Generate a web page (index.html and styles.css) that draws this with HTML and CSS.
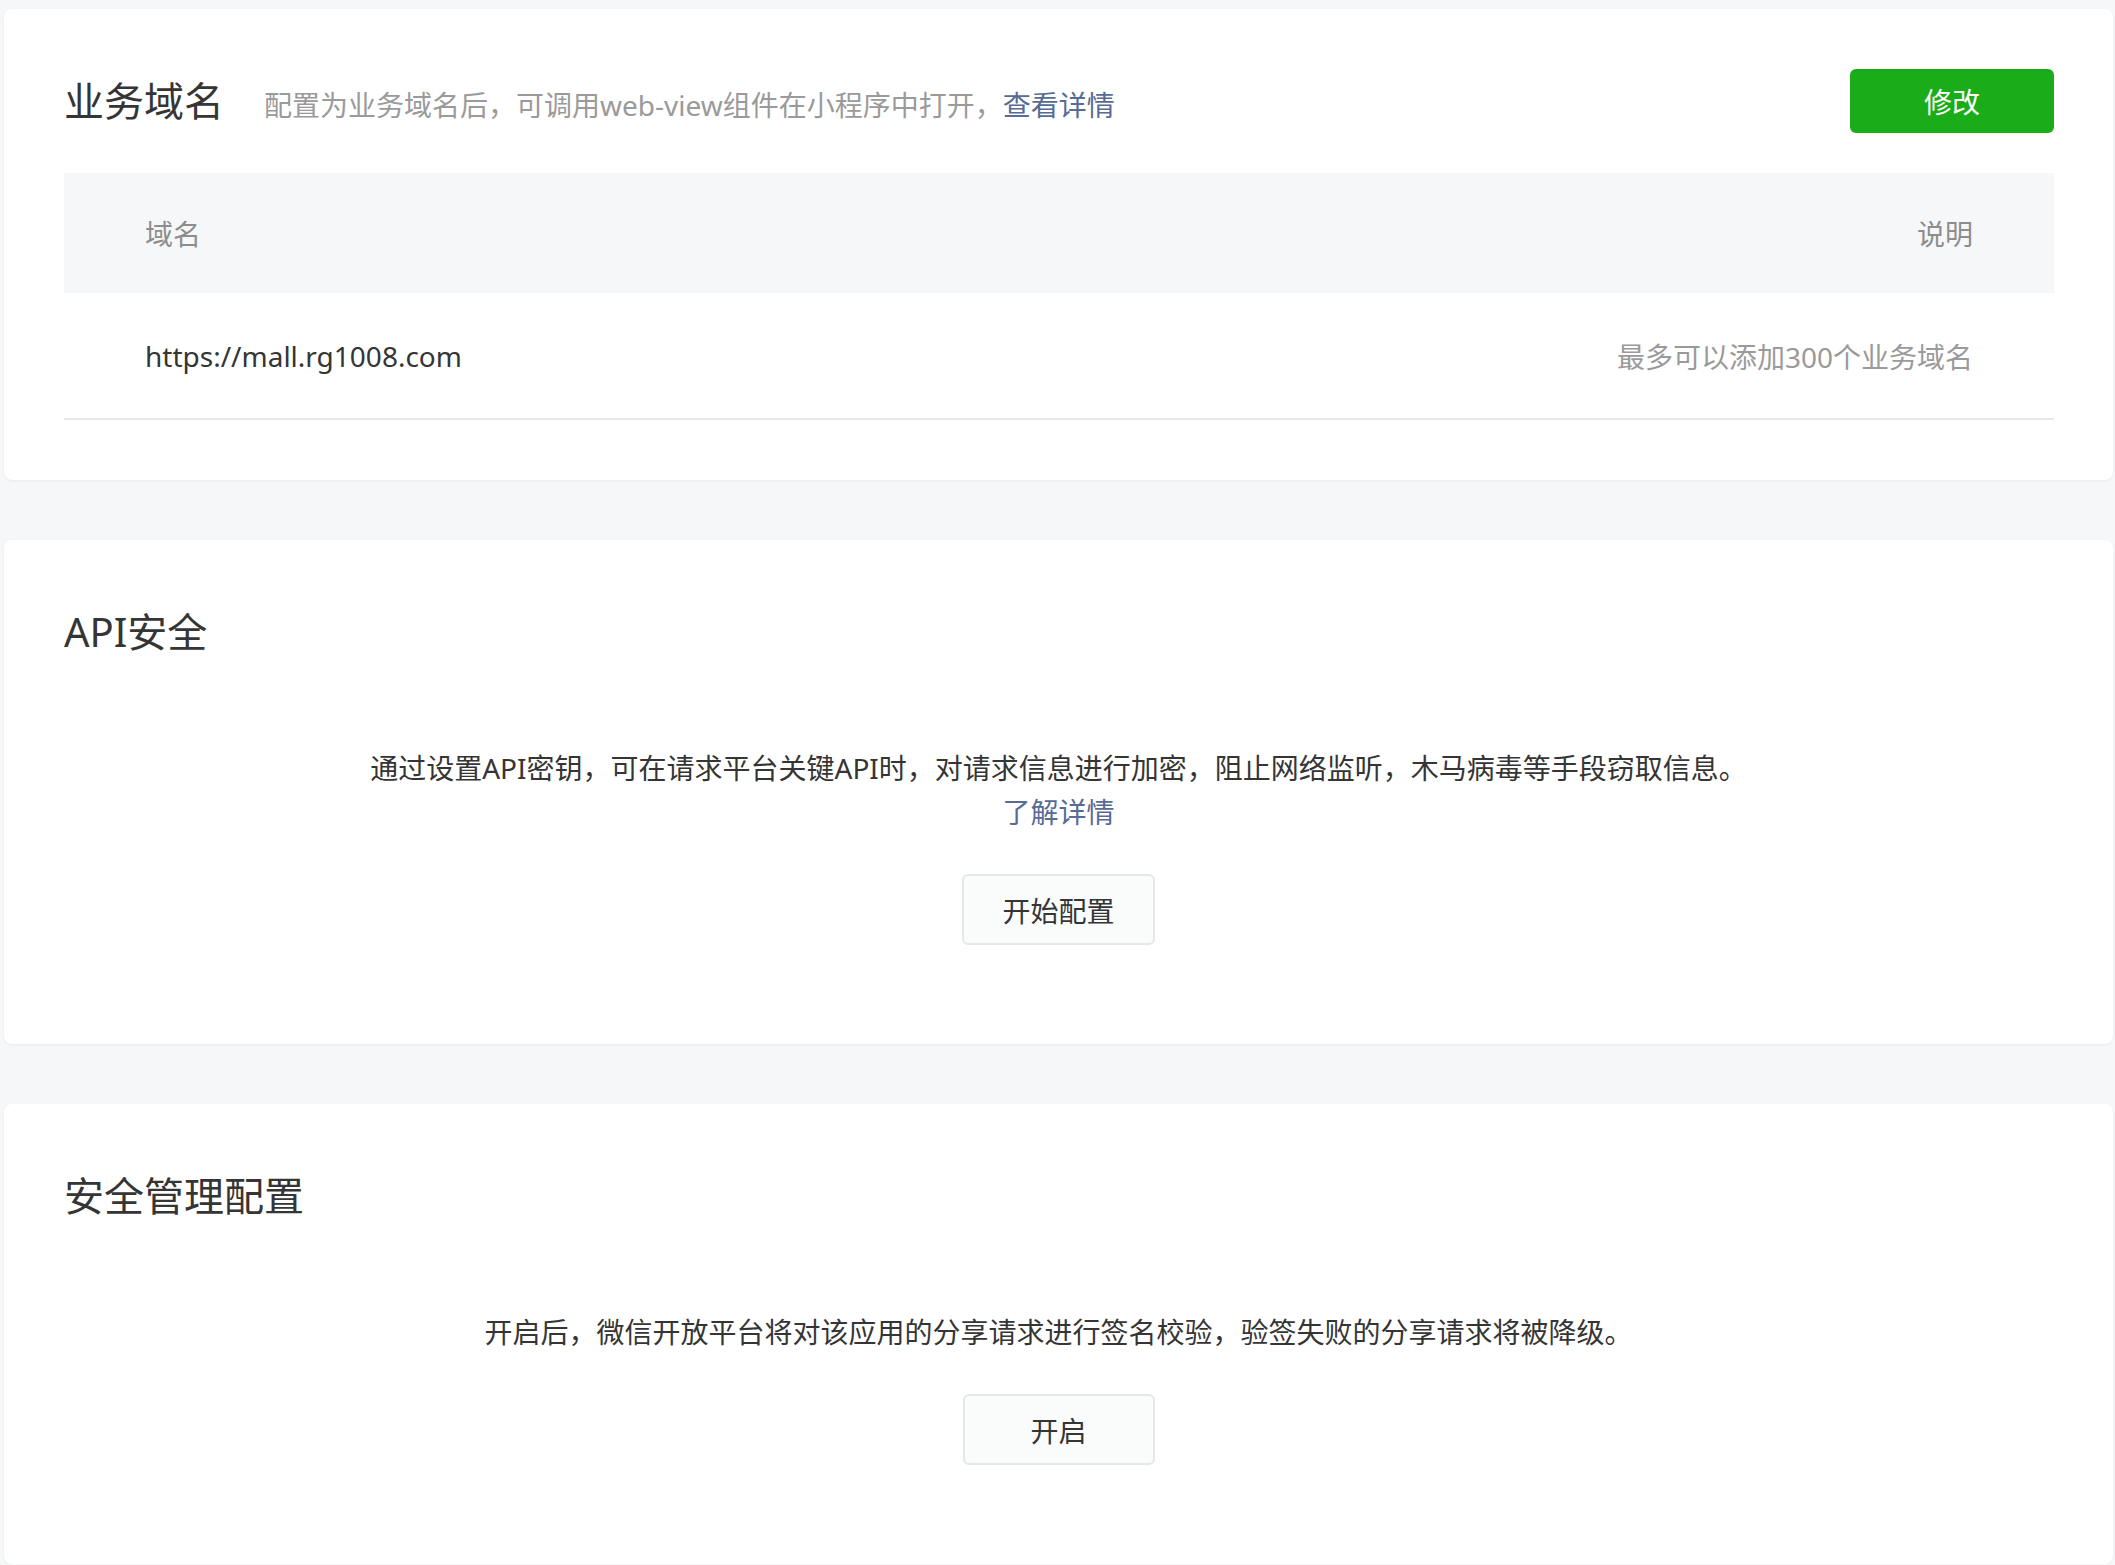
FILE: index.html
```html
<!DOCTYPE html>
<html lang="zh-CN">
<head>
<meta charset="utf-8">
<title>开发设置</title>
<link rel="stylesheet" href="styles.css">
</head>
<body>
<div class="page">
  <section class="card">
    <div class="card-head">
      <div class="head-left">
        <h2 class="card-title">业务域名</h2>
        <p class="head-desc">配置为业务域名后，可调用web-view组件在小程序中打开，<a class="link" href="#">查看详情</a></p>
      </div>
      <button class="btn btn-primary" type="button">修改</button>
    </div>
    <table class="table">
      <thead>
        <tr><th class="col-left">域名</th><th class="col-right">说明</th></tr>
      </thead>
      <tbody>
        <tr><td class="col-left">https://mall.rg1008.com</td><td class="col-right tip">最多可以添加300个业务域名</td></tr>
      </tbody>
    </table>
  </section>

  <section class="card card-tall">
    <h2 class="card-title">API安全</h2>
    <div class="center-body">
      <p class="body-text">通过设置API密钥，可在请求平台关键API时，对请求信息进行加密，阻止网络监听，木马病毒等手段窃取信息。</p>
      <p class="body-text"><a class="link" href="#">了解详情</a></p>
      <button class="btn btn-default" type="button">开始配置</button>
    </div>
  </section>

  <section class="card card-tall">
    <h2 class="card-title">安全管理配置</h2>
    <div class="center-body">
      <p class="body-text">开启后，微信开放平台将对该应用的分享请求进行签名校验，验签失败的分享请求将被降级。</p>
      <button class="btn btn-default" type="button">开启</button>
    </div>
  </section>
</div>
</body>
</html>
```

FILE: styles.css
```css
* { box-sizing: border-box; }
html, body {
  margin: 0;
  padding: 0;
  background: #f6f7f9;
}
body {
  font-family: "Noto Sans", "Noto Sans CJK SC", sans-serif;
  color: #353535;
  font-size: 28px;
}
.page {
  padding: 9px 2px 0 4px;
  display: flex;
  flex-direction: column;
  gap: 60px;
}
.card {
  background: #fff;
  border-radius: 8px;
  box-shadow: 0 1px 3px rgba(0, 0, 0, 0.06);
  padding: 60px 60px 60px 60px;
}
.card-tall {
  padding-bottom: 99px;
}
.card-head {
  display: flex;
  align-items: center;
  justify-content: space-between;
  height: 64px;
}
.head-left {
  display: flex;
  align-items: baseline;
}
.card-title {
  margin: 0;
  font-size: 40px;
  font-weight: 400;
  line-height: 64px;
  color: #353535;
}
.head-desc {
  margin: 0 0 0 40px;
  font-size: 28px;
  color: #9a9a9a;
}
.link {
  color: #576b95;
  text-decoration: none;
}
.btn {
  font-family: inherit;
  font-size: 28px;
  cursor: pointer;
}
.btn-primary {
  width: 204px;
  height: 64px;
  margin-right: -1px;
  border: none;
  border-radius: 6px;
  background: #1aad19;
  color: #fff;
}
.btn-default {
  min-width: 192px;
  height: 71px;
  padding: 0 38px;
  border: 2px solid #e4e8eb;
  border-radius: 6px;
  background: #fafbfb;
  color: #353535;
  margin-top: 40px;
}
.table {
  width: calc(100% + 1px);
  margin-top: 40px;
  border-collapse: collapse;
}
.table th {
  height: 120px;
  background: #f6f7f9;
  font-weight: 400;
  color: #8d8d8d;
  font-size: 28px;
}
.table td {
  height: 126px;
  border-bottom: 2px solid #e7e8ec;
  font-size: 28px;
  color: #353535;
}
.col-left {
  text-align: left;
  padding-left: 81px;
}
.col-right {
  text-align: right;
  padding-right: 81px;
}
.table td.tip {
  color: #9a9a9a;
}
.center-body {
  display: flex;
  flex-direction: column;
  align-items: center;
  margin-top: 82px;
}
.body-text {
  margin: 0;
  line-height: 44px;
  font-size: 28px;
  color: #353535;
  text-align: center;
}
```
